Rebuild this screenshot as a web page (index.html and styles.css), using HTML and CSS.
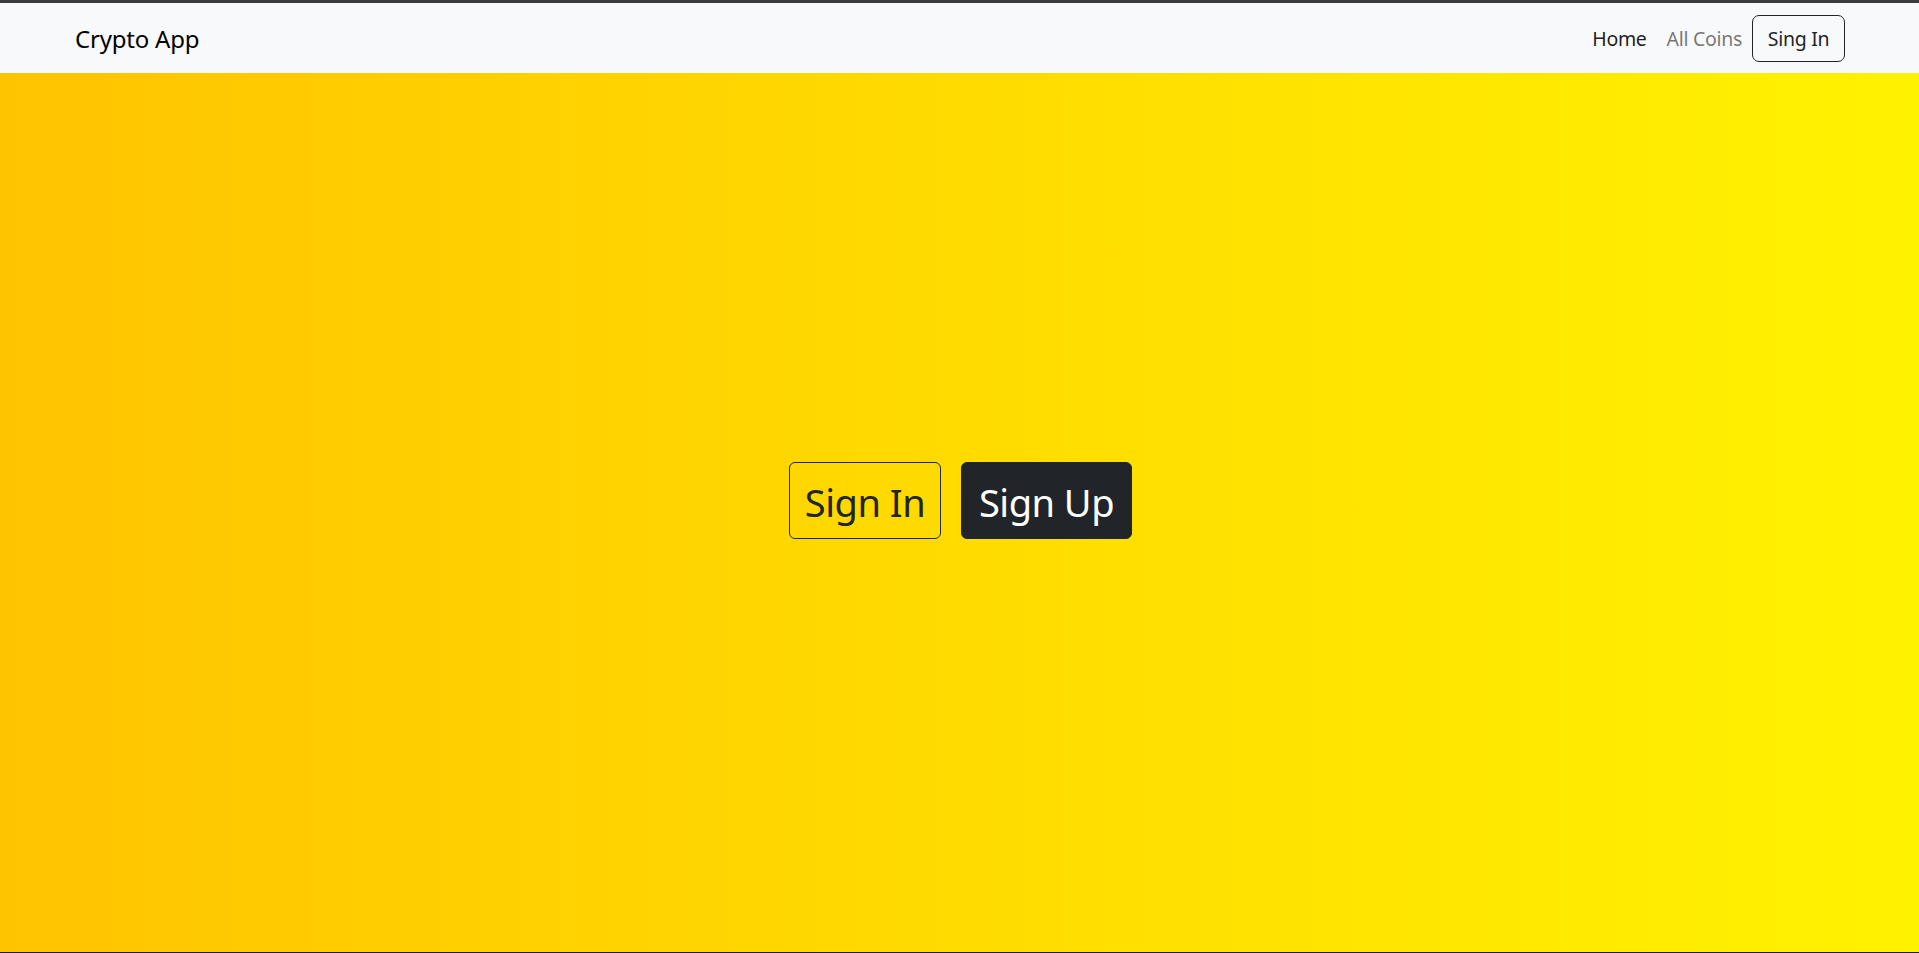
FILE: index.html
```html
<!DOCTYPE html>
<html lang="en">
<head>
<meta charset="utf-8">
<title>Crypto App</title>
<link rel="stylesheet" href="styles.css">
</head>
<body>
<div class="topline"></div>
<nav class="navbar">
  <a class="brand" href="#">Crypto App</a>
  <div class="nav">
    <a class="nav-link active" href="#">Home</a>
    <a class="nav-link" href="#">All Coins</a>
    <a class="btn btn-outline btn-nav" href="#">Sing In</a>
  </div>
</nav>
<main class="hero">
  <div class="actions">
    <a class="btn btn-outline btn-big" href="#">Sign In</a>
    <a class="btn btn-dark btn-big" href="#">Sign Up</a>
  </div>
</main>
<div class="bottomline"></div>
</body>
</html>
```

FILE: styles.css
```css
* { box-sizing: border-box; }
html, body { margin: 0; height: 100%; }
body {
  font-family: "Noto Sans", "Open Sans", sans-serif;
  color: #212529;
  display: flex;
  flex-direction: column;
  overflow: hidden;
}
a { text-decoration: none; }
.topline { height: 3px; background: #3c3c3c; flex: none; }
.bottomline { height: 1px; background: #1e1e1e; flex: none; }
.navbar {
  flex: none;
  height: 70px;
  background: #f8f9fa;
  display: flex;
  align-items: center;
  justify-content: space-between;
  padding: 0 74px 0 75px;
}
.brand {
  font-size: 24px;
  color: #000;
  line-height: 1;
  letter-spacing: -0.2px;
  padding-top: 2px;
}
.nav { display: flex; align-items: center; }
.nav-link {
  font-size: 19.5px;
  color: rgba(0,0,0,.55);
  padding: 1px 10px 0;
  letter-spacing: -0.3px;
}
.nav-link.active { color: rgba(0,0,0,.9); }
.btn {
  display: inline-flex;
  align-items: center;
  justify-content: center;
  border: 1px solid #212529;
  color: #212529;
  border-radius: 6px;
}
.btn-nav {
  height: 47px;
  width: 93px;
  font-size: 19.5px;
  border-radius: 7px;
  letter-spacing: -0.3px;
  padding-top: 1px;
}
.hero {
  flex: 1;
  background: linear-gradient(to right, #ffc400, #fff200);
  display: flex;
  align-items: center;
  justify-content: center;
  padding-bottom: 25px;
}
.actions { display: flex; gap: 20px; margin-left: 2px; }
.btn-big {
  height: 77px;
  font-size: 38px;
  letter-spacing: -0.5px;
  padding: 4px 14px 0;
}
.btn-big.btn-outline { width: 152px; }
.btn-dark { background: #212529; color: #fff; width: 171px; }
```
